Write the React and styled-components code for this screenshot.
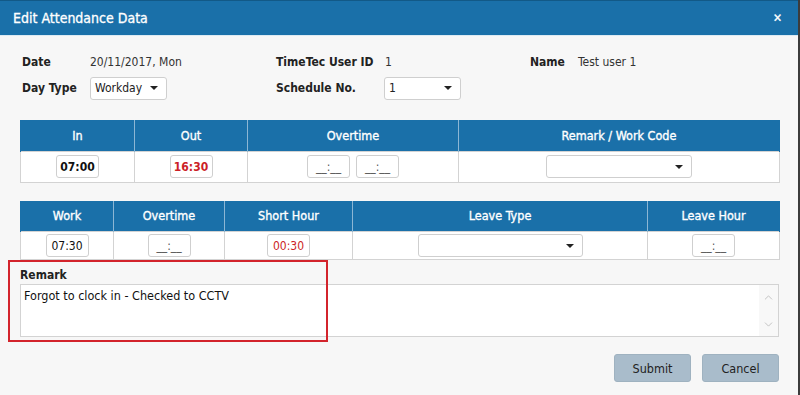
import React from 'react'
import styled, { createGlobalStyle } from 'styled-components'
import { ChevronUp, ChevronDown } from 'lucide-react'

const GlobalStyle = createGlobalStyle`
html, body {
  margin: 0;
  padding: 0;
  background: #f7f7f7;
}
body {
  font-family: "DejaVu Sans Condensed", "DejaVu Sans", sans-serif;
  font-size: 12px;
  color: #222;
}
`

const Dialog = styled.div`
position: relative;
width: 800px;
height: 395px;
box-sizing: border-box;
background: #f7f7f7;
border-right: 2px solid #3c3c3c;
display: flex;
flex-direction: column;
overflow: hidden;
`

const TitleBar = styled.div`
height: 36px;
box-sizing: border-box;
background: #1a70a9;
border-top: 1px solid #125987;
border-bottom: 1px solid #dceaf3;
display: flex;
align-items: center;
justify-content: space-between;
padding: 0 16px 0 13px;
color: #fff;
font-size: 14px;
-webkit-text-stroke: 0.3px #fff;
`

const CloseBtn = styled.span`
font-weight: bold;
font-size: 12px;
line-height: 1;
`

const Body = styled.div`
padding: 14px 19px 0 20px;
display: flex;
flex-direction: column;
`

const InfoGrid = styled.div`
display: grid;
grid-template-columns: 68px 186px 109px 145px 48px auto;
grid-auto-rows: 24px;
row-gap: 2px;
align-items: center;
padding-left: 2px;
`

const Label = styled.span`
font-weight: bold;
color: #222;
`

const Value = styled.span`
color: #333;
`

const Select = styled.div`
width: ${p => p.width}px;
height: 23px;
box-sizing: border-box;
background: #fff;
border: 1px solid #cfcfcf;
border-radius: 3px;
display: flex;
align-items: center;
padding: 0 8px 0 4px;
margin-left: ${p => p.shift || 0}px;
color: #222;
&::after {
  content: '';
  margin-left: auto;
  border-left: 4px solid transparent;
  border-right: 4px solid transparent;
  border-top: 4px solid #222;
}
`

const Table = styled.table`
width: 759px;
border-collapse: collapse;
table-layout: fixed;
background: #fff;
margin-top: ${p => p.top}px;
`

const Th = styled.th`
width: ${p => p.w}px;
height: 31px;
box-sizing: border-box;
padding: 0;
background: #1a70a9;
color: #fff;
font-weight: normal;
font-size: 12.5px;
-webkit-text-stroke: 0.35px #fff;
border-left: 1px solid #8cb6d4;
&:first-child { border-left: 1px solid #1a70a9; }
&:last-child { border-right: 1px solid #1a70a9; }
`

const Td = styled.td`
height: ${p => p.h}px;
box-sizing: border-box;
padding: 0;
text-align: center;
vertical-align: middle;
border: 1px solid #d3d3d3;
`

const TimeBox = styled.span`
display: inline-flex;
align-items: center;
justify-content: center;
width: 43px;
height: 23px;
box-sizing: border-box;
background: #fff;
border: 1px solid #cfcfcf;
border-radius: 3px;
margin: 0 3px;
font-size: 12px;
color: ${p => (p.red ? '#cc1f27' : p.blank ? '#555' : '#111')};
font-weight: ${p => (p.bold ? 'bold' : 'normal')};
`

const Cell = styled.div`
display: flex;
justify-content: center;
align-items: center;
`

const RemarkSection = styled.div`
margin-top: 7px;
display: flex;
flex-direction: column;
`

const RemarkLabel = styled.span`
font-weight: bold;
height: 16px;
line-height: 16px;
margin-bottom: 1px;
`

const RemarkBox = styled.div`
height: 53px;
box-sizing: border-box;
background: #fff;
border: 1px solid #d3d3d3;
display: flex;
`

const RemarkText = styled.div`
flex: 1;
padding: 3px 3px;
font-size: 12.5px;
color: #111;
`

const ScrollStrip = styled.div`
width: 19px;
background: #f8f8f8;
display: flex;
flex-direction: column;
justify-content: space-between;
align-items: center;
padding: 6px 0 5px;
color: #b8b8b8;
`

const Highlight = styled.div`
position: absolute;
left: 8px;
top: 260px;
width: 320px;
height: 82px;
box-sizing: border-box;
border: 2px solid #d3242c;
pointer-events: none;
`

const Actions = styled.div`
margin-top: 17px;
display: flex;
justify-content: flex-end;
gap: 11px;
`

const Button = styled.button`
width: 77px;
height: 28px;
border: 1px solid #9fb2c0;
border-radius: 3px;
background: #a9bccb;
color: #222;
font-family: inherit;
font-size: 12.5px;
padding: 0;
`

const table1 = [
  { title: 'In', w: 114 },
  { title: 'Out', w: 113 },
  { title: 'Overtime', w: 211 },
  { title: 'Remark / Work Code', w: 321 },
]

const table2 = [
  { title: 'Work', w: 93 },
  { title: 'Overtime', w: 111 },
  { title: 'Short Hour', w: 128 },
  { title: 'Leave Type', w: 295 },
  { title: 'Leave Hour', w: 132 },
]

export default function App() {
  return (
    <Dialog>
      <GlobalStyle />
      <TitleBar>
        <span>Edit Attendance Data</span>
        <CloseBtn>✕</CloseBtn>
      </TitleBar>
      <Body>
        <InfoGrid>
          <Label>Date</Label>
          <Value>20/11/2017, Mon</Value>
          <Label>TimeTec User ID</Label>
          <Value>1</Value>
          <Label>Name</Label>
          <Value>Test user 1</Value>
          <Label>Day Type</Label>
          <Select width={77}>Workday</Select>
          <Label>Schedule No.</Label>
          <Select width={77} shift={-1}>1</Select>
        </InfoGrid>

        <Table top={20}>
          <thead>
            <tr>
              {table1.map(c => <Th key={c.title} w={c.w}>{c.title}</Th>)}
            </tr>
          </thead>
          <tbody>
            <tr>
              <Td h={31}><TimeBox bold>07:00</TimeBox></Td>
              <Td h={31}><TimeBox bold red>16:30</TimeBox></Td>
              <Td h={31}><TimeBox blank>__:__</TimeBox><TimeBox blank>__:__</TimeBox></Td>
              <Td h={31}><Cell><Select width={146} /></Cell></Td>
            </tr>
          </tbody>
        </Table>

        <Table top={18}>
          <thead>
            <tr>
              {table2.map(c => <Th key={c.title} w={c.w}>{c.title}</Th>)}
            </tr>
          </thead>
          <tbody>
            <tr>
              <Td h={28}><TimeBox>07:30</TimeBox></Td>
              <Td h={28}><TimeBox blank>__:__</TimeBox></Td>
              <Td h={28}><TimeBox red>00:30</TimeBox></Td>
              <Td h={28}><Cell><Select width={165} /></Cell></Td>
              <Td h={28}><TimeBox blank>__:__</TimeBox></Td>
            </tr>
          </tbody>
        </Table>

        <RemarkSection>
          <RemarkLabel>Remark</RemarkLabel>
          <RemarkBox>
            <RemarkText>Forgot to clock in - Checked to CCTV</RemarkText>
            <ScrollStrip>
              <ChevronUp size={13} strokeWidth={1.5} />
              <ChevronDown size={13} strokeWidth={1.5} />
            </ScrollStrip>
          </RemarkBox>
        </RemarkSection>

        <Actions>
          <Button>Submit</Button>
          <Button>Cancel</Button>
        </Actions>
      </Body>
      <Highlight />
    </Dialog>
  )
}
